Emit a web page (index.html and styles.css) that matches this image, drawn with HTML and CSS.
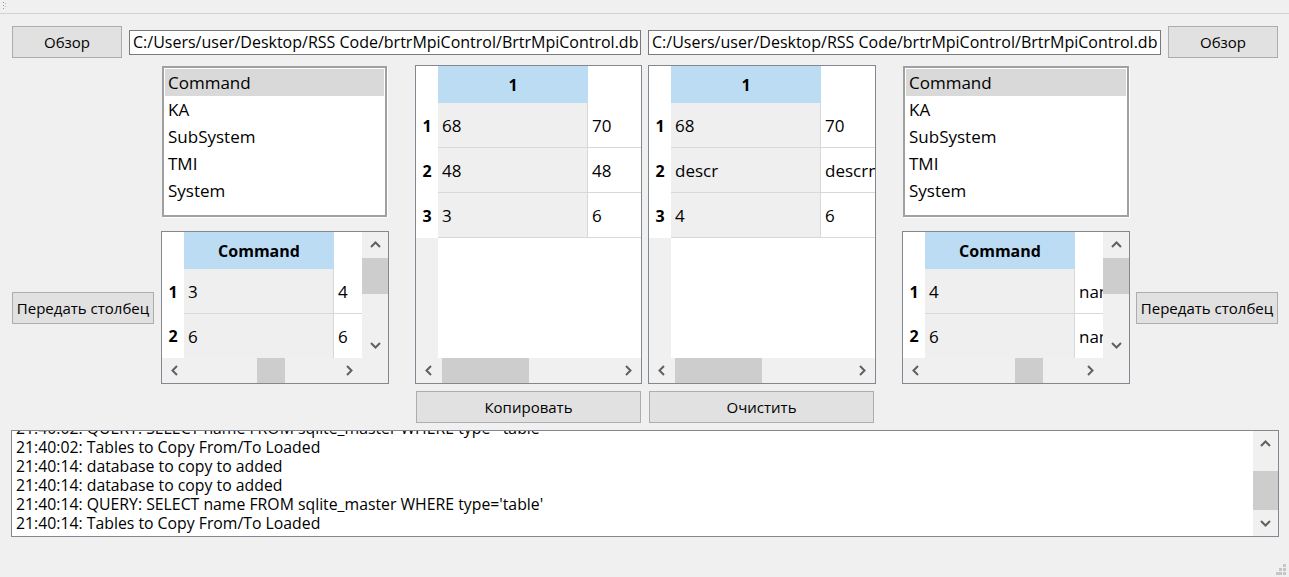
FILE: index.html
```html
<!DOCTYPE html>
<html lang="ru">
<head>
<meta charset="utf-8">
<title>Copy DB</title>
<link rel="stylesheet" href="styles.css">
</head>
<body>
<div class="titlebar">
  <svg class="grip" width="5" height="8" viewBox="0 0 5 8"><rect x="1" y="1" width="1" height="1" fill="#9a9a9a"/><rect x="1" y="4" width="1" height="1" fill="#9a9a9a"/><rect x="1" y="7" width="1" height="1" fill="#9a9a9a"/><rect x="3" y="2" width="1" height="1" fill="#c0c0c0"/><rect x="3" y="5" width="1" height="1" fill="#c0c0c0"/></svg>
</div>

<div class="toprow">
  <button class="btn btn-browse">Обзор</button>
  <div class="path path-left">C:/Users/user/Desktop/RSS Code/brtrMpiControl/BrtrMpiControl.db</div>
  <div class="path path-right">C:/Users/user/Desktop/RSS Code/brtrMpiControl/BrtrMpiControl.db</div>
  <button class="btn btn-browse">Обзор</button>
</div>

<div class="main">
  <button class="btn send send-left">Передать столбец</button>

  <ul class="listbox list-left">
    <li class="sel">Command</li>
    <li>KA</li>
    <li>SubSystem</li>
    <li>TMI</li>
    <li>System</li>
  </ul>

  <div class="tbl small st-left">
    <div class="rh-top"></div>
    <div class="hdr">Command</div>
    <div class="hdr-blank"></div>
    <div class="vs">
      <div class="arr"><svg width="11" height="7" viewBox="0 0 11 7"><path d="M1 6 L5.5 1.5 L10 6" fill="none" stroke="#606060" stroke-width="2"/></svg></div>
      <div class="track"><div class="thumb vthumb-small"></div></div>
      <div class="arr"><svg width="11" height="7" viewBox="0 0 11 7"><path d="M1 1 L5.5 5.5 L10 1" fill="none" stroke="#606060" stroke-width="2"/></svg></div>
    </div>
    <div class="rh">1</div><div class="c1">3</div><div class="c2">4</div>
    <div class="rh">2</div><div class="c1 cut">6</div><div class="c2 cut">6</div>
    <div class="hs">
      <div class="arr"><svg width="7" height="11" viewBox="0 0 7 11"><path d="M6 1 L1.5 5.5 L6 10" fill="none" stroke="#606060" stroke-width="2"/></svg></div>
      <div class="track"><div class="thumb hthumb-sl"></div></div>
      <div class="arr"><svg width="7" height="11" viewBox="0 0 7 11"><path d="M1 1 L5.5 5.5 L1 10" fill="none" stroke="#606060" stroke-width="2"/></svg></div>
    </div>
    <div class="corner"></div>
  </div>

  <div class="tbl big big-l bt-left">
    <div class="rh-top"></div>
    <div class="hdr">1</div>
    <div class="hdr-blank"></div>
    <div class="rh">1</div><div class="c1">68</div><div class="c2">70</div>
    <div class="rh">2</div><div class="c1">48</div><div class="c2">48</div>
    <div class="rh">3</div><div class="c1">3</div><div class="c2">6</div>
    <div class="rh-empty"></div><div class="body-empty"></div>
    <div class="hs">
      <div class="arr"><svg width="7" height="11" viewBox="0 0 7 11"><path d="M6 1 L1.5 5.5 L6 10" fill="none" stroke="#606060" stroke-width="2"/></svg></div>
      <div class="track"><div class="thumb hthumb-big"></div></div>
      <div class="arr"><svg width="7" height="11" viewBox="0 0 7 11"><path d="M1 1 L5.5 5.5 L1 10" fill="none" stroke="#606060" stroke-width="2"/></svg></div>
    </div>
  </div>
  <button class="btn copy">Копировать</button>

  <div class="tbl big big-r bt-right">
    <div class="rh-top"></div>
    <div class="hdr">1</div>
    <div class="hdr-blank"></div>
    <div class="rh">1</div><div class="c1">68</div><div class="c2">70</div>
    <div class="rh">2</div><div class="c1">descr</div><div class="c2">descrnew</div>
    <div class="rh">3</div><div class="c1">4</div><div class="c2">6</div>
    <div class="rh-empty"></div><div class="body-empty"></div>
    <div class="hs">
      <div class="arr"><svg width="7" height="11" viewBox="0 0 7 11"><path d="M6 1 L1.5 5.5 L6 10" fill="none" stroke="#606060" stroke-width="2"/></svg></div>
      <div class="track"><div class="thumb hthumb-big"></div></div>
      <div class="arr"><svg width="7" height="11" viewBox="0 0 7 11"><path d="M1 1 L5.5 5.5 L1 10" fill="none" stroke="#606060" stroke-width="2"/></svg></div>
    </div>
  </div>
  <button class="btn clear">Очистить</button>

  <ul class="listbox list-right">
    <li class="sel">Command</li>
    <li>KA</li>
    <li>SubSystem</li>
    <li>TMI</li>
    <li>System</li>
  </ul>

  <div class="tbl small st-right">
    <div class="rh-top"></div>
    <div class="hdr">Command</div>
    <div class="hdr-blank"></div>
    <div class="vs">
      <div class="arr"><svg width="11" height="7" viewBox="0 0 11 7"><path d="M1 6 L5.5 1.5 L10 6" fill="none" stroke="#606060" stroke-width="2"/></svg></div>
      <div class="track"><div class="thumb vthumb-small"></div></div>
      <div class="arr"><svg width="11" height="7" viewBox="0 0 11 7"><path d="M1 1 L5.5 5.5 L10 1" fill="none" stroke="#606060" stroke-width="2"/></svg></div>
    </div>
    <div class="rh">1</div><div class="c1">4</div><div class="c2">name</div>
    <div class="rh">2</div><div class="c1 cut">6</div><div class="c2 cut">name</div>
    <div class="hs">
      <div class="arr"><svg width="7" height="11" viewBox="0 0 7 11"><path d="M6 1 L1.5 5.5 L6 10" fill="none" stroke="#606060" stroke-width="2"/></svg></div>
      <div class="track"><div class="thumb hthumb-sr"></div></div>
      <div class="arr"><svg width="7" height="11" viewBox="0 0 7 11"><path d="M1 1 L5.5 5.5 L1 10" fill="none" stroke="#606060" stroke-width="2"/></svg></div>
    </div>
    <div class="corner"></div>
  </div>

  <button class="btn send send-right">Передать столбец</button>
</div>

<div class="log">
  <div class="log-text">
    <div class="log-lines">
      <div>21:40:02: QUERY: SELECT name FROM sqlite_master WHERE type='table'</div>
      <div>21:40:02: Tables to Copy From/To Loaded</div>
      <div>21:40:14: database to copy to added</div>
      <div>21:40:14: database to copy to added</div>
      <div>21:40:14: QUERY: SELECT name FROM sqlite_master WHERE type='table'</div>
      <div>21:40:14: Tables to Copy From/To Loaded</div>
    </div>
  </div>
  <div class="vs log-vs">
    <div class="arr"><svg width="11" height="7" viewBox="0 0 11 7"><path d="M1 6 L5.5 1.5 L10 6" fill="none" stroke="#606060" stroke-width="2"/></svg></div>
    <div class="track"><div class="thumb vthumb-log"></div></div>
    <div class="arr"><svg width="11" height="7" viewBox="0 0 11 7"><path d="M1 1 L5.5 5.5 L10 1" fill="none" stroke="#606060" stroke-width="2"/></svg></div>
  </div>
</div>

<svg class="sizegrip" width="11" height="12" viewBox="0 0 11 12">
  <rect x="7" y="0" width="3" height="3" fill="#c6c6c6"/>
  <rect x="3" y="4" width="3" height="3" fill="#c6c6c6"/>
  <rect x="7" y="4" width="3" height="3" fill="#c6c6c6"/>
  <rect x="0" y="8" width="3" height="3" fill="#c6c6c6"/>
  <rect x="3" y="8" width="3" height="3" fill="#c6c6c6"/>
  <rect x="7" y="8" width="3" height="3" fill="#c6c6c6"/>
</svg>
</body>
</html>
```

FILE: styles.css
```css
* { box-sizing: border-box; }
html, body { margin: 0; padding: 0; }
body {
  width: 1289px;
  height: 577px;
  overflow: hidden;
  position: relative;
  background: #f0f0f0;
  font-family: "Open Sans", "Noto Sans", sans-serif;
  color: #000;
}

.titlebar {
  height: 14px;
  border-bottom: 1px solid #d2d2d2;
  padding: 1px 0 0 2px;
}
.grip { display: block; }

.toprow {
  display: flex;
  align-items: center;
  gap: 7px;
  margin: 12px 0 0 12px;
  height: 32px;
}

.btn {
  font-family: inherit;
  font-size: 15px;
  color: #000;
  background: #e1e1e1;
  border: 1px solid #adadad;
  border-radius: 0;
  margin: 0;
  padding: 0;
  height: 32px;
}
.btn-browse { width: 110px; }

.path {
  height: 25px;
  background: #fff;
  border: 1px solid #7a7a7a;
  font-size: 16px;
  line-height: 23px;
  padding-left: 3px;
  white-space: nowrap;
  overflow: hidden;
}
.path-left { width: 512px; }
.path-right { width: 513px; }

.main {
  display: grid;
  grid-template-columns: 142px 7px 228px 26px 227px 6px 228px 26px 228px 6px 142px;
  grid-template-rows: 152px 14px 153px 7px 32px;
  margin: 7px 0 0 12px;
}

/* list boxes */
.listbox {
  list-style: none;
  margin: 0;
  padding: 1px;
  background: #fff;
  border: 2px solid #a0a0a0;
  box-shadow: 1px 1px 0 #fff;
  font-size: 17px;
}
.listbox li {
  height: 27px;
  line-height: 27px;
  padding-left: 3px;
  white-space: nowrap;
}
.listbox li.sel { background: #d9d9d9; }

/* placement */
.send { width: 142px; align-self: center; grid-row: 3; }
.send-left { grid-column: 1; }
.send-right { grid-column: 11; }
.list-left { grid-column: 3; grid-row: 1; margin: 1px 0 0 1px; width: 225px; height: 151px; }
.list-right { grid-column: 9; grid-row: 1; margin: 1px 0 0 1px; width: 226px; height: 151px; }
.st-left { grid-column: 3; grid-row: 3; }
.st-right { grid-column: 9; grid-row: 3; }
.bt-left { grid-column: 5; grid-row: 1 / 4; }
.bt-right { grid-column: 7; grid-row: 1 / 4; }
.copy { grid-column: 5; grid-row: 5; margin: 0 1px; }
.clear { grid-column: 7; grid-row: 5; margin-left: 1px; width: 225px; }

/* tables */
.tbl {
  display: grid;
  border: 1px solid #828790;
  background: #fff;
  overflow: hidden;
  font-size: 17px;
}
.small {
  grid-template-columns: 22px 150px 28px 26px;
  grid-template-rows: 37px 45px 44px 25px;
}
.big { grid-template-rows: 37px 45px 45px 45px 1fr 25px; }
.big-l { grid-template-columns: 22px 150px 53px; }
.big-r { grid-template-columns: 22px 150px 54px; }

.rh-top, .hdr-blank { background: #fff; }
.hdr {
  background: #bcdcf4;
  font-weight: bold;
  font-size: 16px;
  display: flex;
  align-items: center;
  justify-content: center;
}
.rh {
  background: #fff;
  font-weight: bold;
  font-size: 16px;
  display: flex;
  align-items: center;
  justify-content: center;
}
.c1, .c2 {
  display: flex;
  align-items: center;
  padding-left: 4px;
  white-space: nowrap;
  overflow: hidden;
  border-bottom: 1px solid #d8d8d8;
}
.c1 { background: #efefef; border-right: 1px solid #d8d8d8; }
.c2 { background: #fff; }
.cut { border-bottom: none; padding-top: 1px; }
.rh-empty { background: #f0f0f0; }
.body-empty { grid-column: 2 / 4; background: #fff; }

/* scrollbars */
.hs {
  grid-column: 1 / 4;
  display: flex;
  background: #f0f0f0;
}
.vs {
  grid-column: 4;
  grid-row: 1 / 4;
  display: flex;
  flex-direction: column;
  background: #f0f0f0;
}
.arr {
  flex: none;
  display: flex;
  align-items: center;
  justify-content: center;
}
.hs .arr { width: 25px; }
.vs .arr { height: 25px; }
.hs .track { flex: 1; display: flex; }
.vs .track { flex: 1; display: flex; flex-direction: column; }
.thumb { background: #cdcdcd; flex: none; }
.hthumb-sl { margin-left: 70px; width: 28px; }
.hthumb-sr { margin-left: 87px; width: 28px; }
.hthumb-big { margin-left: 1px; width: 87px; }
.vthumb-small { margin-top: 1px; height: 36px; }
.vthumb-log { margin-top: 15px; height: 39px; }
.corner { background: #f0f0f0; }

/* log */
.log {
  display: flex;
  margin: 7px 0 0 11px;
  width: 1268px;
  height: 107px;
  border: 1px solid #828790;
  background: #fff;
}
.log-text {
  flex: 1;
  overflow: hidden;
  padding-left: 4px;
  font-size: 15.8px;
  line-height: 19px;
  white-space: nowrap;
}
.log-lines { margin-top: -12px; }
.log-vs { width: 25px; flex: none; }

.sizegrip {
  position: absolute;
  right: 2px;
  bottom: 1px;
}
```
